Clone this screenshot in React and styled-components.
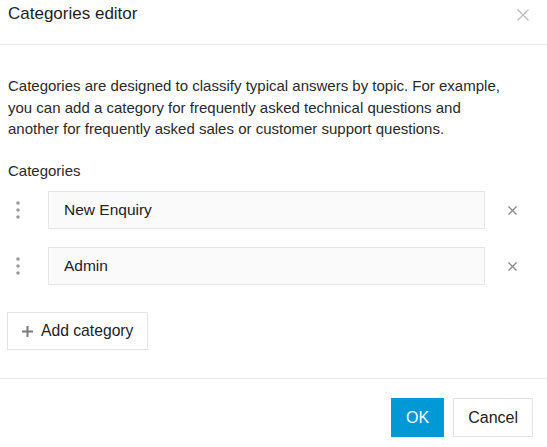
import React from "react";
import styled, { createGlobalStyle } from "styled-components";

const Global = createGlobalStyle`
  html, body { margin: 0; padding: 0; background: #fff; }
  body { font-family: "Liberation Sans", Arial, sans-serif; color: #222; }
  * { box-sizing: border-box; }
`;

const Dialog = styled.div`
  width: 547px;
  height: 447px;
  display: flex;
  flex-direction: column;
  background: #fff;
`;

const Header = styled.div`
  height: 45px;
  flex: none;
  display: flex;
  justify-content: space-between;
  align-items: flex-start;
  padding: 2px 18px 0 8px;
  border-bottom: 1px solid #e8e8e8;
`;

const Title = styled.h1`
  margin: 0;
  font-size: 17px;
  line-height: 24px;
  font-weight: normal;
  color: #1e1e1e;
`;

const CloseButton = styled.button`
  margin-top: 7px;
  padding: 0;
  border: 0;
  background: none;
  width: 12px;
  height: 12px;
  display: flex;
  cursor: pointer;
`;

const Body = styled.div`
  display: flex;
  flex-direction: column;
  padding: 30px 8px 0 8px;
`;

const Description = styled.p`
  margin: 0;
  font-size: 15px;
  line-height: 21.5px;
  color: #2a2a2a;
`;

const Label = styled.div`
  margin-top: 20px;
  font-size: 15px;
  line-height: 21.5px;
  color: #2a2a2a;
`;

const List = styled.div`
  margin-top: 10px;
  display: flex;
  flex-direction: column;
  gap: 18px;
`;

const Row = styled.div`
  display: grid;
  grid-template-columns: 40px 1fr 54px;
  align-items: center;
  height: 38px;
`;

const Handle = styled.div`
  display: flex;
  padding-left: 8px;
  cursor: grab;
`;

const Input = styled.input`
  height: 38px;
  width: 100%;
  border: 1px solid #e6e6e6;
  background: #fafafa;
  padding: 0 15px;
  font-family: inherit;
  font-size: 15.5px;
  color: #222;
  outline: none;
`;

const RemoveButton = styled.button`
  justify-self: center;
  padding: 0;
  border: 0;
  background: none;
  width: 9px;
  height: 9px;
  display: flex;
  cursor: pointer;
`;

const AddButton = styled.button`
  align-self: flex-start;
  margin: 27px 0 0 -1px;
  height: 38px;
  padding: 0 14px;
  display: flex;
  align-items: center;
  gap: 8px;
  border: 1px solid #e3e3e3;
  background: #fff;
  font-family: inherit;
  font-size: 15.7px;
  color: #222;
  cursor: pointer;
`;

const Footer = styled.div`
  margin-top: 28px;
  border-top: 1px solid #e8e8e8;
  padding: 19px 14px 0 8px;
  display: flex;
  justify-content: flex-end;
  gap: 9px;
`;

const FooterButton = styled.button`
  height: 39px;
  padding: 0 14px;
  border: 1px solid ${(p) => (p.$primary ? "#0099d6" : "#e3e3e3")};
  background: ${(p) => (p.$primary ? "#0099d6" : "#fff")};
  color: ${(p) => (p.$primary ? "#fff" : "#222")};
  font-family: inherit;
  font-size: 16px;
  cursor: pointer;
`;

const Cross = ({ size, color, width }) => (
  <svg width={size} height={size} viewBox={`0 0 ${size} ${size}`}>
    <path
      d={`M0.5 0.5 L${size - 0.5} ${size - 0.5} M${size - 0.5} 0.5 L0.5 ${size - 0.5}`}
      stroke={color}
      strokeWidth={width}
      fill="none"
    />
  </svg>
);

const Dots = () => (
  <svg width="4" height="18" viewBox="0 0 4 18">
    <circle cx="2" cy="2" r="1.8" fill="#9a9a9a" />
    <circle cx="2" cy="9" r="1.8" fill="#9a9a9a" />
    <circle cx="2" cy="16" r="1.8" fill="#9a9a9a" />
  </svg>
);

const Plus = () => (
  <svg width="11" height="11" viewBox="0 0 11 11">
    <path d="M5.5 0 V11 M0 5.5 H11" stroke="#7a7a7a" strokeWidth="2" fill="none" />
  </svg>
);

const categories = ["New Enquiry", "Admin"];

export default function App() {
  return (
    <>
      <Global />
      <Dialog>
        <Header>
          <Title>Categories editor</Title>
          <CloseButton aria-label="Close">
            <Cross size={12} color="#bdbdbd" width={1.4} />
          </CloseButton>
        </Header>
        <Body>
          <Description>
            Categories are designed to classify typical answers by topic. For example,
            <br />
            you can add a category for frequently asked technical questions and
            <br />
            another for frequently asked sales or customer support questions.
          </Description>
          <Label>Categories</Label>
          <List>
            {categories.map((c) => (
              <Row key={c}>
                <Handle>
                  <Dots />
                </Handle>
                <Input defaultValue={c} />
                <RemoveButton aria-label="Remove">
                  <Cross size={9} color="#8a8a8a" width={1.3} />
                </RemoveButton>
              </Row>
            ))}
          </List>
          <AddButton>
            <Plus />
            Add category
          </AddButton>
        </Body>
        <Footer>
          <FooterButton $primary>OK</FooterButton>
          <FooterButton>Cancel</FooterButton>
        </Footer>
      </Dialog>
    </>
  );
}
